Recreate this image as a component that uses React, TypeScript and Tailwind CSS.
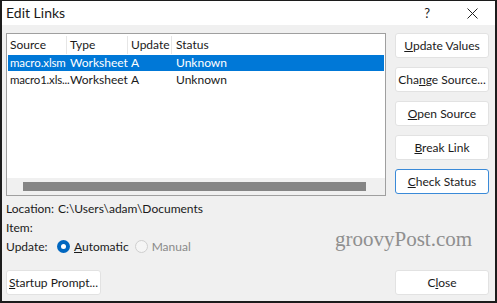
import React from "react";

const font = { fontFamily: 'Lato, "Noto Sans", sans-serif' };

function Btn({ children, focused = false }: { children: React.ReactNode; focused?: boolean }) {
  return (
    <div
      className={`h-[25px] w-[94px] bg-white flex items-center justify-center text-[12px] text-[#1a1a1a] rounded-[3px] border whitespace-nowrap ${
        focused ? "border-[#3a8ad8]" : "border-[#e2e2e2]"
      }`}
    >
      {children}
    </div>
  );
}

export default function App() {
  return (
    <div
      style={font}
      className="w-[497px] h-[303px] bg-[#f0f0f0] border-l-2 border-r-2 border-b-2 border-t border-[#1c1c1c] flex flex-col overflow-hidden text-[#1a1a1a]"
    >
      {/* Title bar */}
      <div className="h-[24px] bg-white flex items-center pl-[4px] shrink-0">
        <span className="text-[14px] leading-none">Edit Links</span>
        <span className="ml-auto text-[13px] leading-none mr-[37px]">?</span>
        <svg width="11" height="11" viewBox="0 0 11 11" className="mr-[17px]">
          <path d="M0.5 0.5L10.5 10.5M10.5 0.5L0.5 10.5" stroke="#222" strokeWidth="1" />
        </svg>
      </div>

      {/* Main */}
      <div className="flex pl-[4px] pt-[8px] gap-[9px]">
        {/* List */}
        <div className="w-[380px] h-[163px] border border-[#9f9f9f] bg-white flex flex-col">
          <div className="flex h-[18px] mt-[2px] items-center text-[12px] leading-none">
            <div className="w-[60px] pl-[3px] border-r border-[#e6e6e6] h-full flex items-center">Source</div>
            <div className="w-[61px] pl-[3px] border-r border-[#e6e6e6] h-full flex items-center">Type</div>
            <div className="w-[44px] pl-[3px] border-r border-[#e6e6e6] h-full flex items-center">Update</div>
            <div className="pl-[4px] h-full flex items-center">Status</div>
          </div>
          <div className="mt-[1px] mx-[1px] h-[16px] bg-[#0078d7] text-white flex items-center text-[12px] leading-none">
            <div className="w-[59px] pl-[2px] whitespace-nowrap text-[11.5px] tracking-[-0.1px]">macro.xlsm</div>
            <div className="w-[61px] pl-[3px] whitespace-nowrap">Worksheet</div>
            <div className="w-[44px] pl-[3px]">A</div>
            <div className="pl-[4px]">Unknown</div>
          </div>
          <div className="mx-[1px] h-[17px] flex items-center text-[12px] leading-none">
            <div className="w-[59px] pl-[2px] whitespace-nowrap text-[11.5px] tracking-[-0.2px]">macro1.xls...</div>
            <div className="w-[61px] pl-[3px] whitespace-nowrap">Worksheet</div>
            <div className="w-[44px] pl-[3px]">A</div>
            <div className="pl-[4px]">Unknown</div>
          </div>
          <div className="mt-auto h-[17px] bg-[#f0f0f0] flex items-center pl-[16px] pr-[19px]">
            <div className="h-[9px] w-full bg-[#858585]" />
          </div>
        </div>

        {/* Buttons */}
        <div className="flex flex-col gap-[9px]">
          <Btn>
            <span>
              <u>U</u>pdate Values
            </span>
          </Btn>
          <Btn>
            <span>
              Cha<u>n</u>ge Source...
            </span>
          </Btn>
          <Btn>
            <span>
              <u>O</u>pen Source
            </span>
          </Btn>
          <Btn>
            <span>
              <u>B</u>reak Link
            </span>
          </Btn>
          <Btn focused>
            <span>
              <u>C</u>heck Status
            </span>
          </Btn>
        </div>
      </div>

      {/* Details */}
      <div className="relative flex-1 flex flex-col pl-[4px] pt-[3px] text-[12px] leading-none">
        <div className="flex items-center h-[19px]">
          <span className="w-[52px]">Location:</span>
          <span>C:\Users\adam\Documents</span>
        </div>
        <div className="flex items-center h-[19px]">
          <span>Item:</span>
        </div>
        <div className="flex items-center h-[19px]">
          <span className="w-[51px]">Update:</span>
          <span className="w-[13px] h-[13px] rounded-full bg-[#0067c0] flex items-center justify-center">
            <span className="w-[5px] h-[5px] rounded-full bg-white" />
          </span>
          <span className="ml-[4px]">
            <u>A</u>utomatic
          </span>
          <span className="ml-[6px] w-[13px] h-[13px] rounded-full border border-[#cfcfcf] bg-[#f5f5f5]" />
          <span className="ml-[4px] text-[#8a8a8a]">Manual</span>
        </div>

        <div className="absolute left-[333px] top-[33px] text-[21px] text-[#8f8f8f]" style={{ fontFamily: '"Liberation Serif", serif' }}>
          groovyPost.com
        </div>

        <div className="mt-auto mb-[6px] flex items-end pr-[6px] text-[12px]">
          <div className="h-[25px] w-[95px] bg-white border border-[#e2e2e2] rounded-[3px] flex items-center justify-center whitespace-nowrap">
            <span>
              <u>S</u>tartup Prompt...
            </span>
          </div>
          <div className="ml-auto">
            <Btn>
              <span>
                C<u>l</u>ose
              </span>
            </Btn>
          </div>
        </div>
      </div>
    </div>
  );
}
